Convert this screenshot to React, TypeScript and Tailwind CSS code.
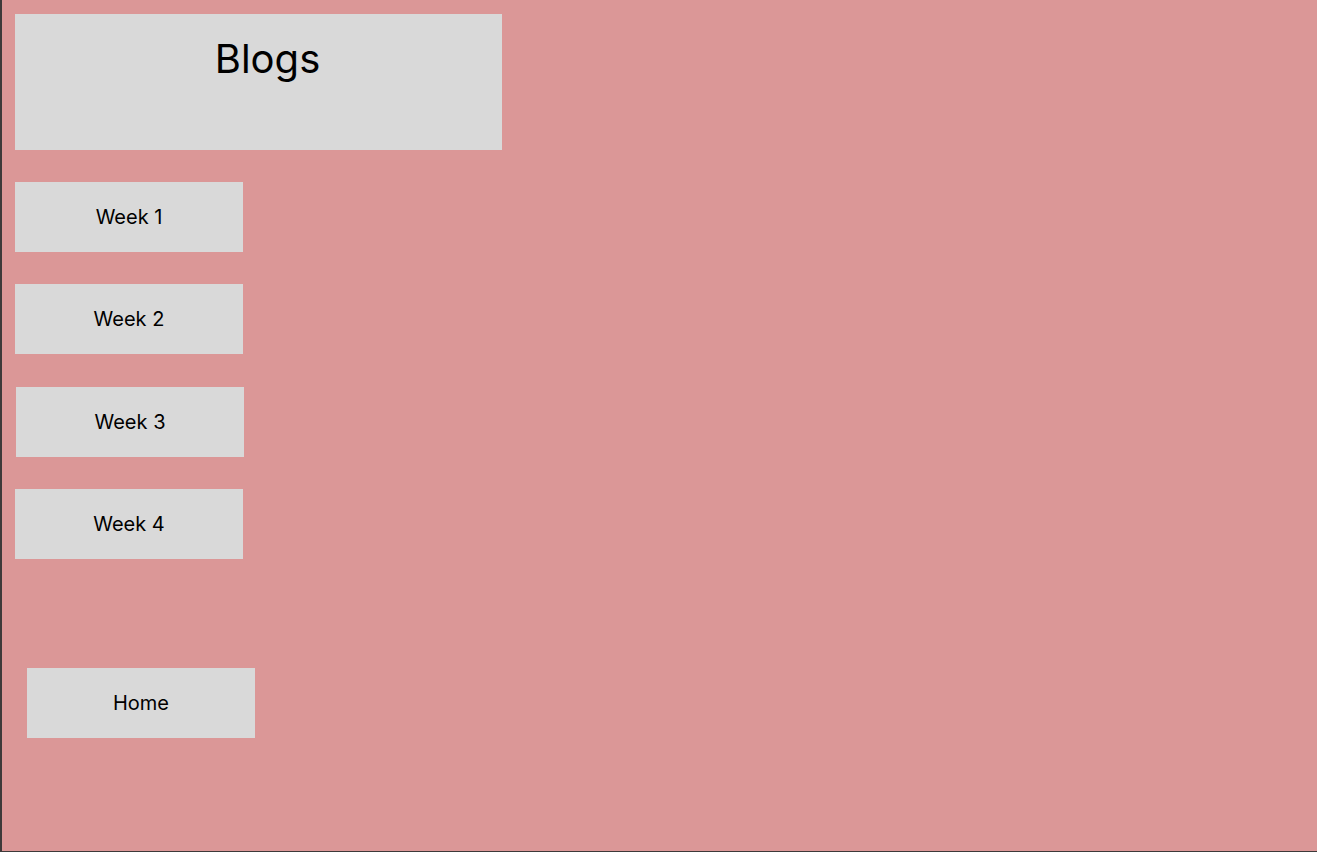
export default function App() {
  const weeks = [
    { label: "Week 1", cls: "ml-0 mt-0" },
    { label: "Week 2", cls: "ml-0 mt-[32px]" },
    { label: "Week 3", cls: "ml-px mt-[33px]" },
    { label: "Week 4", cls: "ml-0 mt-[32px]" },
  ];

  return (
    <main
      className="w-full h-[852px] bg-[#db9797] border-l-2 border-b border-[#3d3a3a] pl-[13px] pt-[14px] flex flex-col items-start text-black"
      style={{ fontFamily: "Inter, 'Noto Sans', sans-serif" }}
    >
      <div className="w-[487px] h-[136px] bg-[#d9d9d9] flex justify-center pt-[21px] pl-[18px]">
        <h1 className="text-[40px] leading-[48px] font-normal">Blogs</h1>
      </div>

      <div className="flex flex-col mt-[32px]">
        {weeks.map((w) => (
          <div
            key={w.label}
            className={`w-[228px] h-[70px] bg-[#d9d9d9] flex items-center justify-center text-[20px] ${w.cls}`}
          >
            {w.label}
          </div>
        ))}
      </div>

      <div className="w-[228px] h-[70px] bg-[#d9d9d9] flex items-center justify-center text-[20px] ml-[12px] mt-[109px]">
        Home
      </div>
    </main>
  );
}
